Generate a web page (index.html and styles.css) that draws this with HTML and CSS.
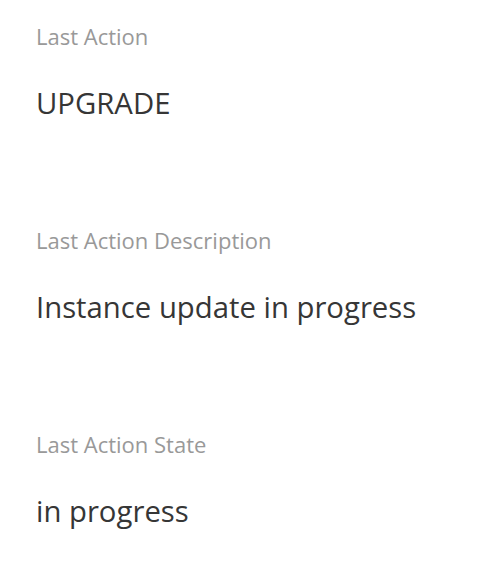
FILE: index.html
```html
<!DOCTYPE html>
<html lang="en">
<head>
  <meta charset="UTF-8">
  <meta name="viewport" content="width=device-width, initial-scale=1.0">
  <title>Instance details</title>
  <link rel="stylesheet" href="styles.css">
</head>
<body>
  <div class="details">
    <div class="field">
      <div class="label">Last Action</div>
      <div class="value">UPGRADE</div>
    </div>
    <div class="field">
      <div class="label">Last Action Description</div>
      <div class="value">Instance update in progress</div>
    </div>
    <div class="field">
      <div class="label">Last Action State</div>
      <div class="value">in progress</div>
    </div>
  </div>
</body>
</html>
```

FILE: styles.css
```css
body {
  margin: 0;
  background: #fff;
  font-family: "Open Sans", "Liberation Sans", sans-serif;
}

.details {
  display: flex;
  flex-direction: column;
  gap: 103px;
  padding: 22px 0 0 36px;
}

.field {
  display: flex;
  flex-direction: column;
  gap: 33px;
}

.label {
  font-size: 22px;
  line-height: 28px;
  color: #999;
}

.value {
  font-size: 29.3px;
  line-height: 40px;
  color: #363636;
}
```
